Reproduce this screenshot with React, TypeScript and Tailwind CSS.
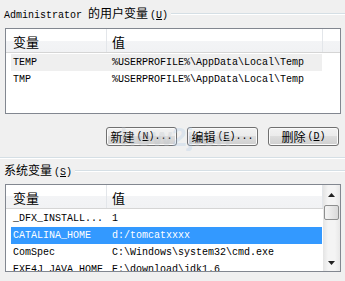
import React from "react";

const cjk = "font-['Noto_Sans_CJK_SC',sans-serif] text-[12px]";

function Key({ k }: { k: string }) {
  return (
    <span className="ml-[2px]">
      (<span className="underline underline-offset-1">{k}</span>)
    </span>
  );
}

function GroupLabel({ children }: { children: React.ReactNode }) {
  return (
    <div className="flex items-center h-[14px]">
      <div className="pl-[4px] pr-[3px] leading-[14px] whitespace-nowrap">{children}</div>
      <div className="flex-1 h-[2px] border-t border-[#d5dfe5] bg-white" />
    </div>
  );
}

function Header({ full }: { full?: boolean }) {
  return (
    <div className="flex h-[24px] border-b border-[#d5d5d5] bg-[linear-gradient(#ffffff_0%,#ffffff_50%,#f3f4f6_50%,#f1f2f4_100%)]">
      <div className={`w-[101px] pl-[7px] pt-[2px] flex items-center border-r border-[#e3e6ea] ${cjk} text-[13px]`}>变量</div>
      <div className={`w-[216px] pl-[5px] pt-[2px] flex items-center border-r border-[#e3e6ea] ${cjk} text-[13px]`}>值</div>
      {full && <div className="flex-1" />}
    </div>
  );
}

function Row({ name, value, state }: { name: string; value: string; state?: "sel" | "dim" }) {
  return (
    <div
      className={
        "ml-[5px] w-[311px] h-[17px] flex items-center whitespace-nowrap border border-transparent " +
        (state === "sel"
          ? "bg-[#3399ff] text-white border-dotted border-[#d89a45]"
          : state === "dim"
          ? "bg-[#efefef]"
          : "")
      }
    >
      <span className="w-[100px] pl-[1px] shrink-0">{name}</span>
      <span>{value}</span>
    </div>
  );
}

function Btn({ children }: { children: React.ReactNode }) {
  return (
    <button className="w-[71px] h-[19px] rounded-[3px] border border-[#707070] shadow-[inset_0_0_0_1px_#fbfbfb] bg-[linear-gradient(#f2f2f2_0%,#ebebeb_50%,#dddddd_50%,#cfcfcf_100%)] flex items-center justify-center leading-none whitespace-nowrap">
      {children}
    </button>
  );
}

export default function App() {
  return (
    <div className="relative w-[345px] h-[281px] overflow-hidden bg-[#f0f0f0] text-black text-[10px] font-['Liberation_Mono','Noto_Sans_CJK_SC',monospace]">
      <div className="pt-[7px]">
        <GroupLabel>
          Administrator <span className={cjk}>的用户变量</span>
          <Key k="U" />
        </GroupLabel>

        {/* user variables */}
        <div className="ml-[5px] mt-[7px] w-[336px] h-[86px] border border-[#828790] bg-white overflow-hidden">
          <Header full />
          <div className="pt-[1px]">
            <Row name="TEMP" value="%USERPROFILE%\AppData\Local\Temp" state="dim" />
            <Row name="TMP" value="%USERPROFILE%\AppData\Local\Temp" />
          </div>
        </div>

        <div className="flex justify-end gap-[10px] pr-[6px] mt-[13px]">
          <Btn>
            <span className={cjk}>新建</span>
            <Key k="N" />
            ...
          </Btn>
          <Btn>
            <span className={cjk}>编辑</span>
            <Key k="E" />
            ...
          </Btn>
          <Btn>
            <span className={cjk}>删除</span>
            <Key k="D" />
          </Btn>
        </div>

        <div className="mt-[11px] h-[2px] border-t border-[#d5dfe5] bg-white" />

        <div className="mt-[5px]">
          <GroupLabel>
            <span className={cjk}>系统变量</span>
            <Key k="S" />
          </GroupLabel>
        </div>

        {/* system variables */}
        <div className="ml-[5px] mt-[6px] w-[336px] h-[88px] border border-[#828790] bg-white overflow-hidden flex">
          <div className="w-[317px]">
            <Header />
            <div className="pt-[1px]">
              <Row name="_DFX_INSTALL..." value="1" />
              <Row name="CATALINA_HOME" value="d:/tomcatxxxx" state="sel" />
              <Row name="ComSpec" value="C:\Windows\system32\cmd.exe" />
              <Row name="EXE4J_JAVA_HOME" value="E:\download\jdk1.6" />
            </div>
          </div>
          <div className="flex-1 flex flex-col bg-[linear-gradient(90deg,#e4e4e4,#f4f4f4_30%,#f4f4f4_70%,#e8e8e8)]">
            <div className="h-[20px] flex items-center justify-center">
              <svg width="7" height="4" viewBox="0 0 7 4">
                <path d="M3.5 0 L7 4 L0 4 Z" fill="#222" />
              </svg>
            </div>
            <div className="mx-[1px] h-[15px] rounded-[2px] border border-[#8e8f8f] bg-[linear-gradient(90deg,#f4f4f4,#e8e8e8_50%,#d9d9d9)]" />
            <div className="flex-1" />
            <div className="h-[17px] flex items-center justify-center">
              <svg width="7" height="4" viewBox="0 0 7 4">
                <path d="M0 0 L7 0 L3.5 4 Z" fill="#222" />
              </svg>
            </div>
          </div>
        </div>
      </div>

      {/* watermark */}
      <div className="absolute left-[120px] top-[124px] pointer-events-none font-['Liberation_Sans',sans-serif] font-bold text-[26px] leading-none text-[rgba(190,196,202,0.3)]">
        how<span className="text-[rgba(170,200,230,0.3)]">2j</span>.cn
      </div>
    </div>
  );
}
